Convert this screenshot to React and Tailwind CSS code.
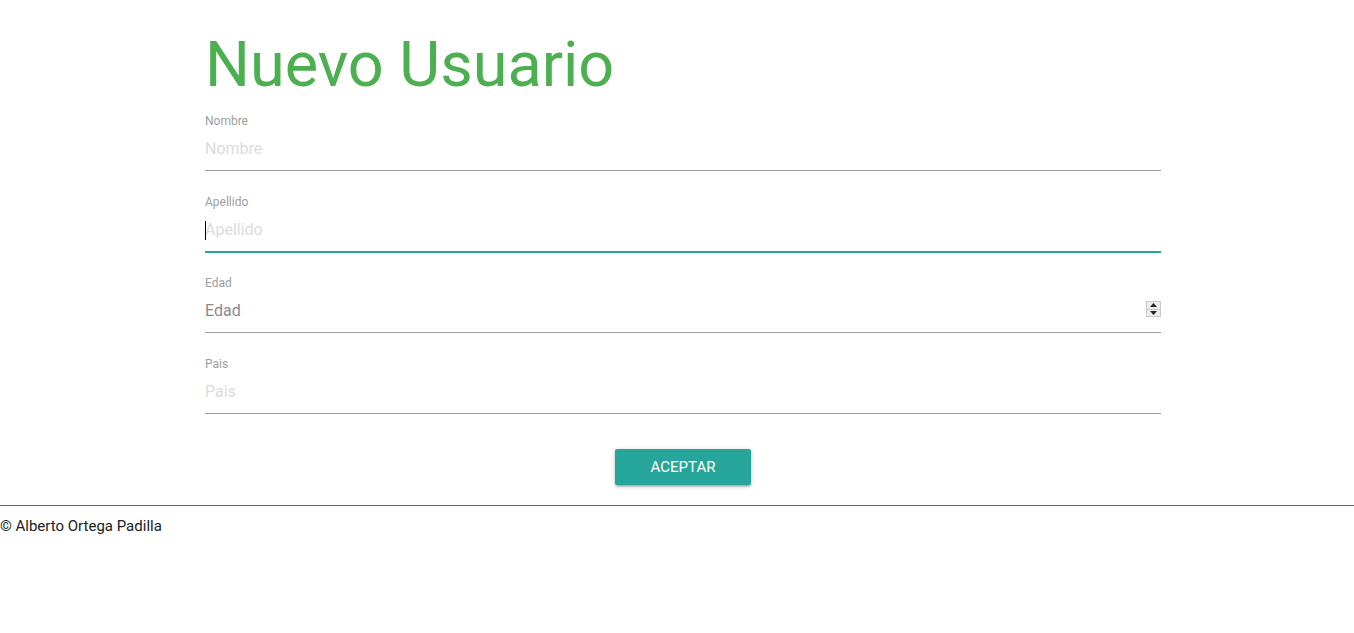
import React from "react";

const font = { fontFamily: "Roboto, 'Liberation Sans', sans-serif" };

function Field({ label, placeholder, focused, number, dark }) {
  return (
    <div className="mb-[24px]">
      <div className="text-[12px] leading-[14px] text-[#9e9e9e]">{label}</div>
      <div
        className={
          "relative flex h-[43px] items-start border-b " +
          (focused
            ? "border-[#26a69a] shadow-[0_1px_0_0_#26a69a]"
            : "border-[#9e9e9e]")
        }
      >
        {focused && (
          <span className="absolute left-0 top-[12px] h-[19px] w-[1px] bg-black" />
        )}
        <span
          className={
            "mt-[3px] text-[16px] leading-[36px] " +
            (dark ? "text-[#8a8a8a]" : "text-[#dcdcdc]")
          }
        >
          {placeholder}
        </span>
        {number && (
          <div className="absolute right-0 top-[11px] flex h-[16px] w-[15px] flex-col border border-[#c8c8c8] bg-[#ececec]">
            <div className="flex flex-1 items-center justify-center border-b border-[#c8c8c8]">
              <svg width="7" height="4" viewBox="0 0 7 4">
                <path d="M0 4 L3.5 0 L7 4 Z" fill="#222" />
              </svg>
            </div>
            <div className="flex flex-1 items-center justify-center">
              <svg width="7" height="4" viewBox="0 0 7 4">
                <path d="M0 0 L3.5 4 L7 0 Z" fill="#222" />
              </svg>
            </div>
          </div>
        )}
      </div>
    </div>
  );
}

export default function App() {
  return (
    <div className="min-h-[633px] bg-white" style={font}>
      <div className="ml-[205px] w-[956px]">
        <h1 className="pt-[28px] text-[63px] leading-[74px] font-normal text-[#4caf50]">
          Nuevo Usuario
        </h1>
        <div className="mt-[12px]">
          <Field label="Nombre" placeholder="Nombre" />
          <Field label="Apellido" placeholder="Apellido" focused />
          <Field label="Edad" placeholder="Edad" number dark />
          <Field label="Pais" placeholder="Pais" />
        </div>
        <div className="mt-[35px] flex justify-center pb-[20px]">
          <button className="h-[36px] w-[136px] rounded-[2px] bg-[#26a69a] text-[15px] text-white shadow-[0_2px_2px_0_rgba(0,0,0,0.14),0_3px_1px_-2px_rgba(0,0,0,0.12),0_1px_5px_0_rgba(0,0,0,0.2)]">
            ACEPTAR
          </button>
        </div>
      </div>
      <div className="border-t border-[#666]" />
      <div className="pt-[10px] text-[15px] leading-[20px] text-[#212121]">
        © Alberto Ortega Padilla
      </div>
    </div>
  );
}
